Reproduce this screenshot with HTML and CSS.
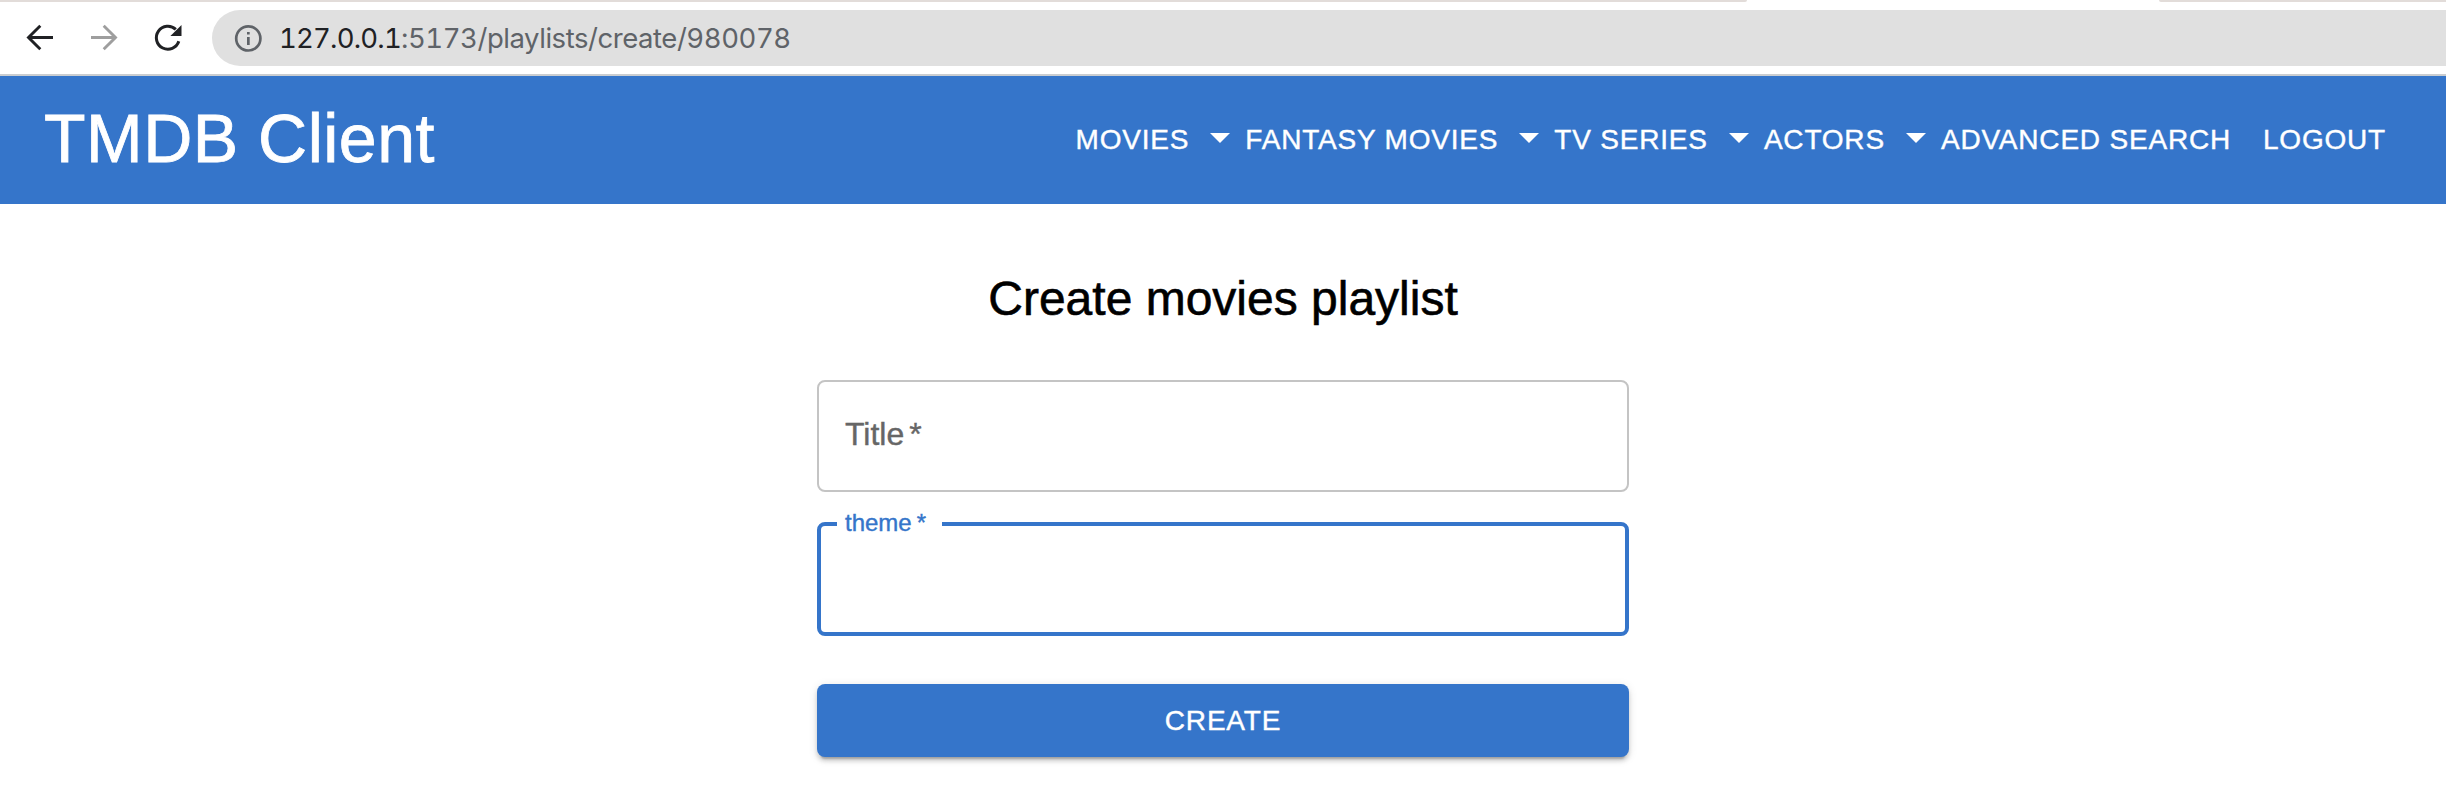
FILE: index.html
```html
<!DOCTYPE html>
<html lang="en">
<head>
<meta charset="utf-8">
<title>TMDB Client</title>
<link rel="stylesheet" href="styles.css">
</head>
<body>
<div class="browser">
  <div class="tabstrip"><span class="tab-left"></span><span class="tab-right"></span></div>
  <div class="toolbar">
    <svg class="tool" width="32" height="32" viewBox="0 0 32 32"><path d="M29 15.5H4M16.3 3.7 4.5 15.5l11.8 11.8" fill="none" stroke="#202124" stroke-width="2.9"/></svg>
    <svg class="tool" width="32" height="32" viewBox="0 0 32 32"><path d="M2 15.5H27M14.7 3.7 26.5 15.5 14.7 27.3" fill="none" stroke="#9e9e9e" stroke-width="2.9"/></svg>
    <svg class="tool" width="32" height="32" viewBox="0 0 32 32"><path d="M25.8 19.3A11.5 11.5 0 1 1 22.8 7.4" fill="none" stroke="#202124" stroke-width="3"/><path d="M28.5 2.9V14H17.4z" fill="#202124"/></svg>
    <div class="address">
      <svg width="28" height="28" viewBox="0 0 28 28"><circle cx="14.3" cy="14.4" r="12.1" fill="none" stroke="#5f6368" stroke-width="2.7"/><path d="M13 7.9h2.7v2.7H13zM13 13h2.7v7.9H13z" fill="#5f6368"/></svg>
      <span class="url"><span class="host">127.0.0.1</span>:5173/playlists/create/980078</span>
    </div>
  </div>
</div>
<header class="appbar">
  <div class="brand">TMDB Client</div>
  <nav class="nav">
    <a>MOVIES</a><svg class="arrow" viewBox="0 0 24 24"><path d="m7 10 5 5 5-5z"/></svg>
    <a>FANTASY MOVIES</a><svg class="arrow" viewBox="0 0 24 24"><path d="m7 10 5 5 5-5z"/></svg>
    <a>TV SERIES</a><svg class="arrow" viewBox="0 0 24 24"><path d="m7 10 5 5 5-5z"/></svg>
    <a>ACTORS</a><svg class="arrow" viewBox="0 0 24 24"><path d="m7 10 5 5 5-5z"/></svg>
    <a>ADVANCED SEARCH</a><a class="logout">LOGOUT</a>
  </nav>
</header>
<main class="content">
  <h1 class="heading">Create movies playlist</h1>
  <div class="field">Title<span class="star">*</span></div>
  <fieldset class="field-active"><legend>theme<span class="star">*</span></legend></fieldset>
  <button class="submit" type="button">CREATE</button>
</main>
</body>
</html>
```
FILE: styles.css
```css
* { box-sizing: border-box; }
body {
  margin: 0;
  height: 796px;
  overflow: hidden;
  background: #fff;
  font-family: "Liberation Sans", Arial, sans-serif;
  -webkit-text-stroke: 0.4px currentColor;
}
.tabstrip { display: flex; justify-content: space-between; height: 2px; }
.tab-left, .tab-right { background: #e2dcd9; }
.tab-left { width: 1747px; border-bottom-right-radius: 2px; }
.tab-right { width: 287px; border-bottom-left-radius: 2px; }
.toolbar {
  display: flex;
  align-items: center;
  height: 74px;
  padding-left: 24px;
  border-bottom: 2px solid #cacdd0;
}
.tool { flex: none; margin-right: 32px; }
.tool:nth-child(2) { margin-left: 1px; }
.tool:nth-child(3) { margin-right: 27px; }
.address {
  flex: 1;
  display: flex;
  align-items: center;
  height: 56px;
  padding-left: 22px;
  border-radius: 28px 0 0 28px;
  background: #e0e0e0;
}
.url {
  margin-left: 17px;
  font: 27.5px/56px Inter, sans-serif;
  font-variant-numeric: tabular-nums;
  letter-spacing: -0.45px;
  -webkit-text-stroke: 0;
  color: #5f6368;
  white-space: nowrap;
}
.host { color: #202124; letter-spacing: -0.8px; }
.appbar {
  display: flex;
  align-items: center;
  justify-content: space-between;
  height: 128px;
  padding: 0 60px 0 44px;
  background: #3575ca;
  color: #fff;
}
.brand { font-size: 68px; line-height: 80px; letter-spacing: 0.5px; padding-bottom: 4px; -webkit-text-stroke-width: 0.8px; }
.nav { display: flex; align-items: center; font-size: 28px; line-height: 48px; letter-spacing: 0.8px; white-space: nowrap; }
.arrow { width: 48px; height: 48px; margin: -7px 1.3px 0 6.8px; fill: #fff; }
.logout { margin-left: 32px; }
.content { display: flex; flex-direction: column; width: 812px; margin: 0 auto; }
.heading {
  margin: 64px 0 0;
  font-size: 48px;
  line-height: 62px;
  padding-bottom: 2px;
  font-weight: 400;
  text-align: center;
  color: #000;
  -webkit-text-stroke-width: 0.6px;
}
.field {
  height: 112px;
  margin-top: 48px;
  padding-left: 26px;
  border: 2px solid #c4c4c4;
  border-radius: 8px;
  font-size: 32px;
  line-height: 105px;
  color: #666;
}
.star { margin-left: 5px; }
.field-active {
  height: 126px;
  margin: 18px 0 0;
  padding: 0 0 0 16px;
  border: 4px solid #3575ca;
  border-radius: 8px;
}
.field-active legend {
  width: 105px;
  height: 28px;
  padding: 0 0 0 8px;
  font-size: 24px;
  line-height: 26px;
  color: #3575ca;
}
.submit {
  height: 73px;
  margin-top: 48px;
  padding: 0;
  border: 0;
  border-radius: 8px;
  background: #3575ca;
  color: #fff;
  font: 28px/73px "Liberation Sans", Arial, sans-serif;
  letter-spacing: 0.8px;
  box-shadow: 0 6px 2px -4px rgba(0,0,0,.2), 0 4px 4px rgba(0,0,0,.14), 0 2px 10px rgba(0,0,0,.12);
}
```
